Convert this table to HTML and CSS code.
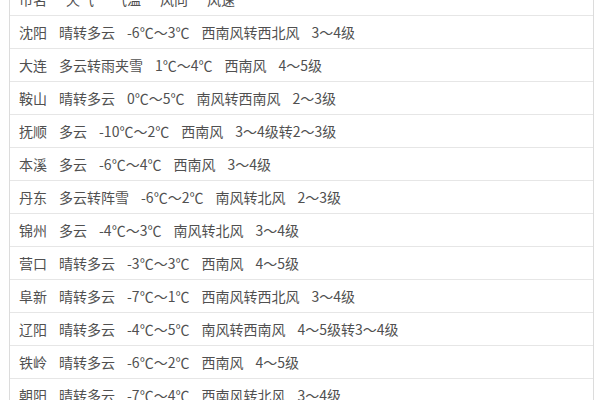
FILE: index.html
```html
<!DOCTYPE html>
<html lang="zh">
<head>
<meta charset="utf-8">
<link rel="stylesheet" href="styles.css">
</head>
<body>
<div class="table">
  <div class="row head"><span>市名</span><span>天气</span><span>气温</span><span>风向</span><span>风速</span></div>
  <div class="row"><span>沈阳</span><span>晴转多云</span><span>-6℃～3℃</span><span>西南风转西北风</span><span>3～4级</span></div>
  <div class="row"><span>大连</span><span>多云转雨夹雪</span><span>1℃～4℃</span><span>西南风</span><span>4～5级</span></div>
  <div class="row"><span>鞍山</span><span>晴转多云</span><span>0℃～5℃</span><span>南风转西南风</span><span>2～3级</span></div>
  <div class="row"><span>抚顺</span><span>多云</span><span>-10℃～2℃</span><span>西南风</span><span>3～4级转2～3级</span></div>
  <div class="row"><span>本溪</span><span>多云</span><span>-6℃～4℃</span><span>西南风</span><span>3～4级</span></div>
  <div class="row"><span>丹东</span><span>多云转阵雪</span><span>-6℃～2℃</span><span>南风转北风</span><span>2～3级</span></div>
  <div class="row"><span>锦州</span><span>多云</span><span>-4℃～3℃</span><span>南风转北风</span><span>3～4级</span></div>
  <div class="row"><span>营口</span><span>晴转多云</span><span>-3℃～3℃</span><span>西南风</span><span>4～5级</span></div>
  <div class="row"><span>阜新</span><span>晴转多云</span><span>-7℃～1℃</span><span>西南风转西北风</span><span>3～4级</span></div>
  <div class="row"><span>辽阳</span><span>晴转多云</span><span>-4℃～5℃</span><span>南风转西南风</span><span>4～5级转3～4级</span></div>
  <div class="row"><span>铁岭</span><span>晴转多云</span><span>-6℃～2℃</span><span>西南风</span><span>4～5级</span></div>
  <div class="row"><span>朝阳</span><span>晴转多云</span><span>-7℃～4℃</span><span>西南风转北风</span><span>3～4级</span></div>
</div>
</body>
</html>
```

FILE: styles.css
```css
html, body {
  margin: 0;
  padding: 0;
  background: #ffffff;
  overflow: hidden;
}
body {
  font-family: "Noto Sans CJK SC", "Noto Sans", sans-serif;
  font-size: 14px;
  color: #505050;
}
.table {
  margin: -17px 0 0 9px;
  width: 585px;
  box-sizing: border-box;
  border-left: 1px solid #dcdcdc;
  border-right: 1px solid #dcdcdc;
}
.row {
  display: flex;
  align-items: center;
  gap: 12px;
  height: 32px;
  padding-left: 9px;
  border-bottom: 1px solid #e6e6e6;
  white-space: nowrap;
}
.row.head {
  gap: 19px;
}
```
